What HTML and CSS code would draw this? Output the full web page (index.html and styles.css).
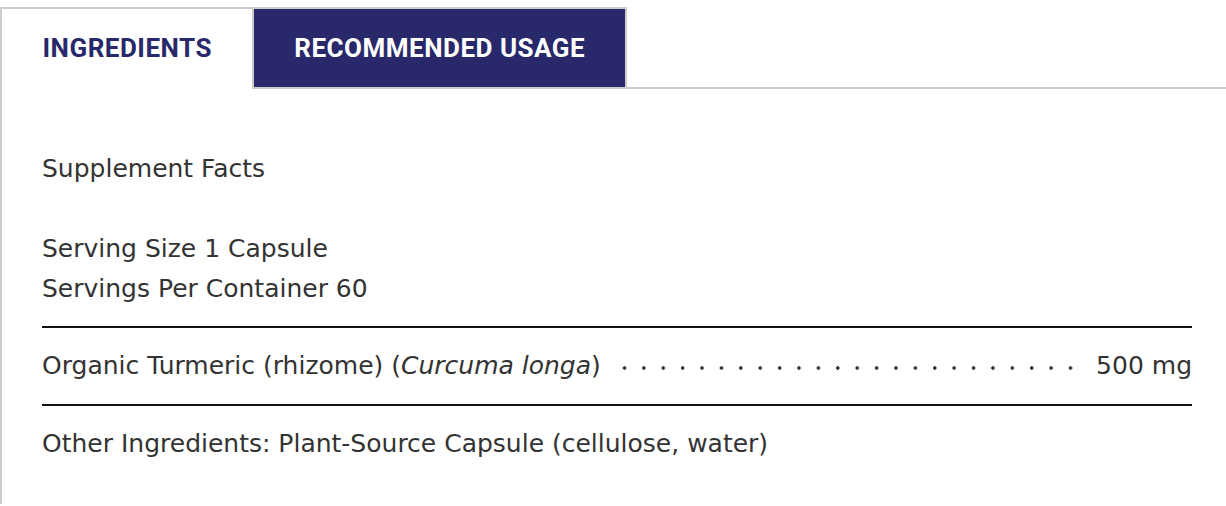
FILE: index.html
```html
<!DOCTYPE html>
<html lang="en">
<head>
<meta charset="utf-8">
<title>Ingredients</title>
<link rel="stylesheet" href="styles.css">
</head>
<body>
<div class="tabs">
  <ul class="tab-nav">
    <li class="tab tab-active">INGREDIENTS</li>
    <li class="tab tab-inactive">RECOMMENDED USAGE</li>
    <li class="tab-fill"></li>
  </ul>
  <div class="panel">
    <p class="title">Supplement Facts</p>
    <p class="serving">Serving Size 1 Capsule<br>Servings Per Container 60</p>
    <div class="facts-row">
      <span class="name">Organic Turmeric (rhizome) (<em>Curcuma longa</em>)</span>
      <span class="leader"></span>
      <span class="amount">500 mg</span>
    </div>
    <p class="other">Other Ingredients: Plant-Source Capsule (cellulose, water)</p>
  </div>
</div>
</body>
</html>
```
FILE: styles.css
```css
html, body {
  margin: 0;
  padding: 0;
  background: #ffffff;
}

body {
  font-family: "DejaVu Sans", sans-serif;
  color: #333333;
}

.tabs {
  padding-top: 7px;
}

.tab-nav {
  display: flex;
  list-style: none;
  margin: 0;
  padding: 0;
}

.tab {
  box-sizing: border-box;
  height: 82px;
  padding-top: 26px;
  font-family: "Roboto", sans-serif;
  font-weight: 700;
  font-size: 26px;
  line-height: 1;
  letter-spacing: 0.5px;
  text-align: center;
  text-indent: 0.5px;
}

.tab-active {
  width: 252px;
  border-top: 2px solid #cccccc;
  border-left: 2px solid #cccccc;
  color: #28286a;
  background: #ffffff;
}

.tab-inactive {
  width: 375px;
  border: 2px solid #cccccc;
  background: #28286a;
  color: #ffffff;
}

.tab-fill {
  flex: 1;
  border-bottom: 2px solid #cccccc;
}

.panel {
  border-left: 2px solid #cccccc;
  padding: 60px 34px 40px 40px;
  font-size: 25px;
  line-height: 40px;
}

.panel p {
  margin: 0;
}

.title {
  margin-bottom: 40px !important;
}

.serving {
  padding-bottom: 17px;
  border-bottom: 2px solid #111111;
}

.facts-row {
  display: flex;
  align-items: baseline;
  padding: 18px 0;
  border-bottom: 2px solid #111111;
}

.facts-row em {
  font-style: italic;
}

.leader {
  flex: 1;
  align-self: stretch;
  margin: 0 16px 0 14px;
  background-image: radial-gradient(circle, #333333 1.5px, transparent 2px);
  background-size: 19px 6px;
  background-repeat: space no-repeat;
  background-position: 0 19px;
}

.amount {
  white-space: nowrap;
}

.other {
  padding-top: 18px;
}
```
